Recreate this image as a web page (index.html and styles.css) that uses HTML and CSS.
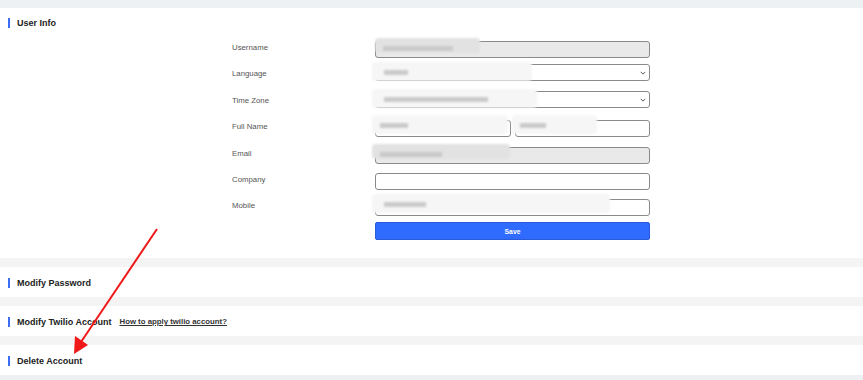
FILE: index.html
```html
<!DOCTYPE html>
<html lang="en">

<head>
    <meta charset="UTF-8">
    <meta name="viewport" content="width=device-width, initial-scale=1.0">
    <title>Account Settings</title>
    <link rel="stylesheet" href="styles.css">
</head>

<body>
    <div class="page">
        <!-- User Info -->
        <section class="card card-info">
            <h2 class="card-title">User Info</h2>
            <div class="form">
                <label class="label">Username</label>
                <div class="field">
                    <input class="input" type="text" disabled>
                    <span class="smudge smudge-dark" style="left:0;width:105px"><i style="left:8px;width:70px"></i></span>
                </div>

                <label class="label">Language</label>
                <div class="field">
                    <div class="input select"></div>
                    <svg class="chevron" viewBox="0 0 8 5"><path d="M1 1 L4 4 L7 1" /></svg>
                    <span class="smudge" style="left:-3px;width:160px"><i style="left:12px;width:24px"></i></span>
                </div>

                <label class="label">Time Zone</label>
                <div class="field">
                    <div class="input select"></div>
                    <svg class="chevron" viewBox="0 0 8 5"><path d="M1 1 L4 4 L7 1" /></svg>
                    <span class="smudge" style="left:-3px;width:165px"><i style="left:12px;width:104px"></i></span>
                </div>

                <label class="label">Full Name</label>
                <div class="field field-pair">
                    <div class="half">
                        <input class="input" type="text">
                        <span class="smudge" style="left:-3px;width:136px"><i style="left:8px;width:28px"></i></span>
                    </div>
                    <div class="half">
                        <input class="input" type="text">
                        <span class="smudge" style="left:-3px;width:85px"><i style="left:8px;width:26px"></i></span>
                    </div>
                </div>

                <label class="label">Email</label>
                <div class="field">
                    <input class="input" type="text" disabled>
                    <span class="smudge smudge-dark" style="left:-3px;width:138px"><i style="left:8px;width:62px"></i></span>
                </div>

                <label class="label">Company</label>
                <div class="field">
                    <input class="input" type="text">
                </div>

                <label class="label">Mobile</label>
                <div class="field">
                    <input class="input" type="text">
                    <span class="smudge" style="left:-3px;width:238px"><i style="left:12px;width:42px"></i></span>
                </div>

                <span></span>
                <button class="btn-save">Save</button>
            </div>
        </section>

        <section class="card">
            <h2 class="card-title">Modify Password</h2>
        </section>

        <section class="card">
            <h2 class="card-title">Modify Twilio Account <a class="help-link" href="#">How to apply twilio account?</a></h2>
        </section>

        <section class="card">
            <h2 class="card-title">Delete Account</h2>
        </section>
    </div>

    <!-- annotation arrow -->
    <svg class="annotation" width="863" height="380" viewBox="0 0 863 380">
        <line x1="157" y1="229" x2="81" y2="342" stroke="#f01818" stroke-width="2" />
        <polygon points="74,354 75,336 88,345" fill="#f01818" />
    </svg>
</body>

</html>
```

FILE: styles.css
```css
/* Basic Styles */
body {
    margin: 0;
    padding: 8px 0 0;
    background-color: #eef1f4;
    font-family: "Liberation Sans", Arial, sans-serif;
    color: #333;
    height: 380px;
    overflow: hidden;
}

.page {
    display: flex;
    flex-direction: column;
    gap: 9px;
    background-color: #f4f4f4;
}

.card {
    background-color: #fff;
    height: 30px;
    display: flex;
    align-items: center;
    padding-top: 2px;
    box-sizing: border-box;
}

.card-info {
    height: 250px;
    display: block;
    padding-top: 0;
}

.card-title {
    position: relative;
    margin: 0;
    padding-left: 17px;
    font-size: 9px;
    line-height: 10px;
    font-weight: bold;
    color: #222;
    display: flex;
    align-items: center;
}

.card-title::before {
    content: "";
    position: absolute;
    left: 8px;
    top: 0;
    width: 2px;
    height: 10px;
    background-color: #3b6ef5;
}

.card-info .card-title {
    padding-top: 10px;
}

.card-info .card-title::before {
    top: 10px;
}

.help-link {
    margin-left: 8px;
    font-size: 7.8px;
    color: #333;
    text-decoration: underline;
}

/* Form */
.form {
    display: grid;
    grid-template-columns: 143px 275px;
    grid-auto-rows: 17px;
    row-gap: 9.4px;
    margin: 10px 0 0 232px;
    align-items: center;
}

.label {
    font-size: 7.8px;
    color: #555;
    padding-top: 2px;
}

.field {
    position: relative;
    height: 17px;
}

.field-pair {
    display: flex;
    gap: 4px;
}

.half {
    position: relative;
    flex: 1;
}

.input {
    box-sizing: border-box;
    width: 100%;
    height: 17px;
    margin: 0;
    padding: 0 4px;
    border: 1px solid #8a8a8a;
    border-radius: 3px;
    background-color: #fff;
    font-size: 8px;
}

.input:disabled {
    background-color: #e9e9e9;
}

.chevron {
    position: absolute;
    right: 4px;
    top: 7px;
    width: 6px;
    height: 4px;
    fill: none;
    stroke: #444;
    stroke-width: 1.2;
}

/* blurred private values */
.smudge {
    position: absolute;
    top: -2px;
    height: 19px;
    background-color: #f6f6f6;
    border-radius: 4px;
    filter: blur(1.2px);
}

.smudge-dark {
    top: 0;
    height: 15px;
    background-color: #e2e2e2;
}

.smudge i {
    position: absolute;
    top: 8px;
    height: 5px;
    background-color: #cacaca;
}

.btn-save {
    box-sizing: border-box;
    height: 18px;
    width: 100%;
    border: 1px solid #2a5ad8;
    border-radius: 2px;
    background-color: #2f6bff;
    color: #fff;
    font-family: "Liberation Sans", Arial, sans-serif;
    font-size: 6.8px;
    font-weight: bold;
    padding: 0;
}

.annotation {
    position: absolute;
    left: 0;
    top: 0;
    pointer-events: none;
}
```
